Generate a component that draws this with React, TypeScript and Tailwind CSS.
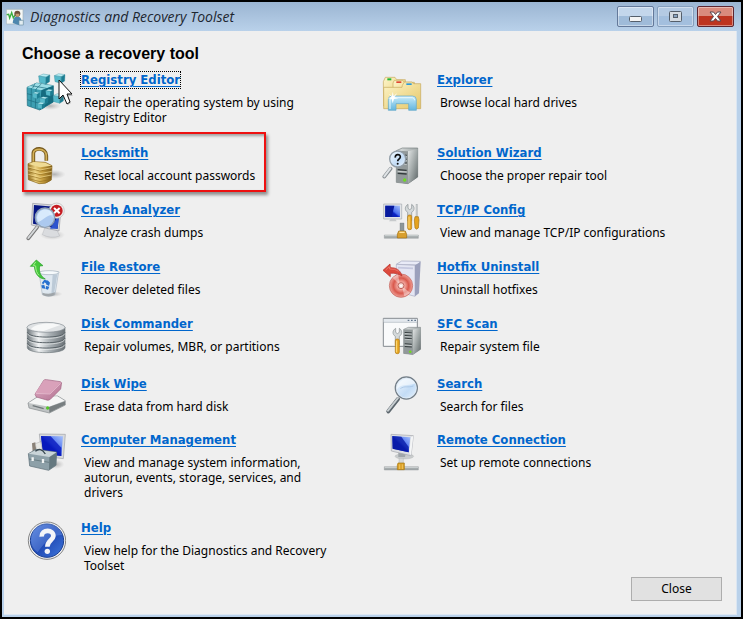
import type { ReactNode } from "react";

type Tool = {
  name: string;
  text: string;
  icon: ReactNode;
  focused?: boolean;
  marked?: boolean;
};

function Icon({ box, children }: { box: string; children: ReactNode }) {
  return (
    <svg viewBox={box} className="h-10 w-10 shrink-0" aria-hidden="true">
      {children}
    </svg>
  );
}

function Gradients() {
  return (
    <svg className="absolute h-0 w-0" aria-hidden="true">
      <defs>
        <linearGradient id="gold" x1="0" x2="1">
          <stop offset="0" stopColor="#8f6a1c" />
          <stop offset=".3" stopColor="#ecd282" />
          <stop offset=".6" stopColor="#c79f40" />
          <stop offset="1" stopColor="#7b5814" />
        </linearGradient>
        <linearGradient id="screen" x1="0" y1="1" x2="1" y2="0">
          <stop offset="0" stopColor="#0a1a8c" />
          <stop offset=".45" stopColor="#0b22c4" />
          <stop offset=".55" stopColor="#4a6ff0" />
          <stop offset="1" stopColor="#a9c4fb" />
        </linearGradient>
        <linearGradient id="lens" x1="0" y1="0" x2="1" y2="1">
          <stop offset="0" stopColor="#f4faff" />
          <stop offset=".6" stopColor="#c3dcf6" />
          <stop offset="1" stopColor="#e8f3fd" />
        </linearGradient>
        <linearGradient id="steel" x1="0" x2="1">
          <stop offset="0" stopColor="#6f777c" />
          <stop offset=".3" stopColor="#f1f3f4" />
          <stop offset=".6" stopColor="#a9b0b4" />
          <stop offset="1" stopColor="#6a7176" />
        </linearGradient>
        <linearGradient id="tower" x1="0" y1="0" x2="1" y2="1">
          <stop offset="0" stopColor="#e3e6e6" />
          <stop offset=".5" stopColor="#a2a9a9" />
          <stop offset="1" stopColor="#5e6768" />
        </linearGradient>
        <linearGradient id="folder" x1="0" y1="0" x2="1" y2="1">
          <stop offset="0" stopColor="#fdf5c9" />
          <stop offset="1" stopColor="#e5c768" />
        </linearGradient>
        <linearGradient id="glass" x1="0" y1="0" x2="0" y2="1">
          <stop offset="0" stopColor="#c9ecfa" />
          <stop offset="1" stopColor="#62b5de" />
        </linearGradient>
        <linearGradient id="pink" x1="0" y1="0" x2="1" y2="1">
          <stop offset="0" stopColor="#e0aec5" />
          <stop offset="1" stopColor="#b37292" />
        </linearGradient>
        <linearGradient id="helpBlue" x1="0" y1="0" x2="1" y2="1">
          <stop offset="0" stopColor="#5b86dd" />
          <stop offset=".5" stopColor="#2049b4" />
          <stop offset="1" stopColor="#3f78dd" />
        </linearGradient>
        <radialGradient id="disc">
          <stop offset="0" stopColor="#fff" />
          <stop offset=".3" stopColor="#f3aaa2" />
          <stop offset=".65" stopColor="#d9594d" />
          <stop offset="1" stopColor="#f0a198" />
        </radialGradient>
        <radialGradient id="shade">
          <stop offset="0" stopColor="#888" stopOpacity=".6" />
          <stop offset="1" stopColor="#aaa" stopOpacity="0" />
        </radialGradient>
      </defs>
    </svg>
  );
}

function Cube({ x, y, s = 1 }: { x: number; y: number; s?: number }) {
  return (
    <g transform={`translate(${x} ${y}) scale(${s})`} stroke="#2c8295" strokeWidth="1">
      <path d="M0 6 L13 0 L32 3 L21 9Z" fill="#b9edf3" />
      <path d="M0 6 L21 9 L20 29 L2 24Z" fill="#56b9ca" />
      <path d="M21 9 L32 3 L31 22 L20 29Z" fill="#1b7d92" />
    </g>
  );
}

const registry = (
  <Icon box="78 216 120 120">
    <ellipse cx="150" cy="318" rx="34" ry="12" fill="url(#shade)" />
    <path d="M81 262 L110 249 L160 257 L160 306 L119 330 L82 317Z" fill="#3c9fb2" stroke="#1e6c7f" strokeWidth="2" />
    <path d="M81 262 L110 249 L160 257 L124 271Z" fill="#9cdde6" />
    <path d="M124 271 L160 257 L160 306 L119 330Z" fill="#146b7f" />
    <path
      d="M94 264 L93 320 M108 267 L106 325 M81 281 L122 291 M82 299 L120 311 M94 257 L140 265 M105 251 L98 264 M124 252 L108 267"
      stroke="#1b6a7c"
      strokeWidth="2"
      fill="none"
    />
    <Cube x={97} y={276} s={0.7} />
    <Cube x={119} y={290} s={0.8} />
    <Cube x={137} y={268} s={0.7} />
    <Cube x={112} y={307} s={0.7} />
    <Cube x={116} y={222} s={1.05} />
    <Cube x={163} y={221} s={1} />
    <Cube x={159} y={281} s={1} />
  </Icon>
);

const padlock = (
  <Icon box="33 60 120 120">
    <ellipse cx="118" cy="148" rx="34" ry="14" fill="url(#shade)" />
    <path d="M55 113 V86 C54 66 94 66 94 92 V107" fill="none" stroke="#76591d" strokeWidth="11" />
    <path d="M55 113 V86 C54 68 94 68 94 92 V107" fill="none" stroke="#d4b158" strokeWidth="5" />
    <path d="M39 116 L55 110 L91 112 L111 122 L109 165 Q91 179 72 176 L40 164Z" fill="url(#gold)" stroke="#8a6820" strokeWidth="2" />
    <path d="M40 117 L56 111 L91 113 L110 122 L75 127Z" fill="#efdb94" />
    <path d="M40 129 L75 138 L110 131 M40 140 L75 149 L110 142 M40 151 L75 160 L109 153 M41 161 L75 170 L108 163" fill="none" stroke="#94701f" strokeWidth="2" />
    <path d="M40 126 L75 135 L110 128 M40 137 L75 146 L110 139 M40 148 L75 157 L109 150" fill="none" stroke="#f4dc90" strokeWidth="2" />
  </Icon>
);

const crash = (
  <Icon box="33 231 120 120">
    <ellipse cx="112" cy="330" rx="38" ry="15" fill="url(#shade)" />
    <path d="M90 306 L124 312 L134 333 Q108 342 82 329Z" fill="#dadcdf" stroke="#a5a8ad" />
    <path d="M53 235 L139 242 L132 318 L49 300Z" fill="#d8d9dc" stroke="#9a9ca3" strokeWidth="2" />
    <path d="M57 240 L134 247 L128 311 L54 296Z" fill="#071784" />
    <path d="M105 311 L128 275 L134 247 L128 311Z" fill="#2e54ce" />
    <circle cx="125" cy="257" r="23" fill="#eee" stroke="#bbb" strokeWidth="2" />
    <circle cx="125" cy="257" r="18" fill="#c51c22" />
    <path d="M117 249 L134 265 M134 249 L117 265" stroke="#fff" strokeWidth="6" />
    <path d="M40 340 L66 307" stroke="#777" strokeWidth="11" strokeLinecap="round" />
    <path d="M40 339 L66 306" stroke="#d5d8da" strokeWidth="6" strokeLinecap="round" />
    <circle cx="90" cy="278" r="29" fill="#b9d7f7" fillOpacity=".93" stroke="#8fa0b4" strokeWidth="4" />
    <path d="M66 277 C72 246 106 249 114 269 C95 270 83 287 68 291Z" fill="#e4f2ff" fillOpacity=".8" />
  </Icon>
);

const restore = (
  <Icon box="33 27 120 120">
    <ellipse cx="113" cy="132" rx="30" ry="9" fill="url(#shade)" />
    <path d="M72 67 L131 65 L120 134 Q100 143 82 134Z" fill="#dde7ef" fillOpacity=".9" stroke="#aab8c6" strokeWidth="2" />
    <ellipse cx="102" cy="68" rx="30" ry="6" fill="#f6fafc" stroke="#a3b0bd" strokeWidth="2" />
    <path d="M113 74 L127 73 L117 132 L109 134Z" fill="#bccad7" />
    <path d="M82 128 Q101 135 120 127 L119 135 Q101 144 83 135Z" fill="#9fa5a9" />
    <path d="M81 98 L88 89 L99 92 L94 101 L89 97 L84 104Z M98 91 L105 98 L102 108 L93 103Z M79 106 L88 105 L91 116 L81 115Z M93 108 L103 110 L99 119 L92 117Z" fill="#2670cf" />
    <path d="M46 49 L64 30 L84 47 L74 48 C71 65 76 78 91 87 C74 87 60 75 58 49Z" fill="#45c83b" stroke="#259d27" strokeWidth="2" />
    <path d="M62 36 L55 46 L62 48 C62 61 66 70 72 76" fill="none" stroke="#a4f18d" strokeWidth="3" />
  </Icon>
);

const disks = (
  <Icon box="33 198 120 120">
    <path d="M37 231 V293 C38 313 149 313 150 293 V231Z" fill="url(#steel)" stroke="#737b80" strokeWidth="2" />
    <path d="M37 247 C40 266 147 266 150 247 M37 264 C40 283 147 283 150 264 M37 280 C40 299 147 299 150 280" fill="none" stroke="#596267" strokeWidth="3" />
    <path d="M38 251 C42 270 145 270 149 251 M38 268 C42 287 145 287 149 268 M38 284 C42 303 145 303 149 284" fill="none" stroke="#eef1f2" strokeWidth="2" />
    <ellipse cx="93" cy="232" rx="57" ry="15" fill="#dfe2e4" stroke="#858d92" strokeWidth="2" />
    <path d="M48 237 C61 218 117 217 136 225 L86 243 C71 243 53 241 48 237Z" fill="#f7f8f8" />
  </Icon>
);

const wipe = (
  <Icon box="33 378 120 120">
    <path d="M39 459 L68 440 L128 438 L151 452 L151 465 L103 489 L42 474Z" fill="#bfc3c4" stroke="#858a8d" strokeWidth="2" />
    <path d="M41 459 L69 441 L127 439 L149 452 L102 470Z" fill="#f5f6f6" />
    <path d="M102 471 L150 454 V464 L103 488Z" fill="#777e80" />
    <path d="M53 467 L86 476" stroke="#70777a" strokeWidth="4" />
    <circle cx="98" cy="474" r="5" fill="#56c42a" />
    <path d="M60 433 L86 391 Q89 388 95 389 L136 395 Q142 397 139 404 L137 417 L106 448 Q100 453 92 449 L64 441Z" fill="url(#pink)" stroke="#a06280" strokeWidth="2" />
    <path d="M61 429 L87 391 L138 397 L105 431Z" fill="#d9a1ba" />
    <path d="M62 430 L105 432 L137 400" stroke="#ecc6d7" strokeWidth="2" fill="none" />
  </Icon>
);

const computer = (
  <Icon box="33 21 120 120">
    <ellipse cx="123" cy="118" rx="25" ry="14" fill="url(#shade)" />
    <path d="M73 27 L151 28 L145 101 L80 93Z" fill="#d8dadd" stroke="#9ea1a6" strokeWidth="2" />
    <path d="M78 33 L144 34 L139 93 L84 86Z" fill="url(#screen)" />
    <path d="M78 33 L107 34 L139 68 L139 93 L84 86Z" fill="#0718bd" fillOpacity=".8" />
    <path d="M51 55 L61 52 L64 82 H53Z" fill="#8a8177" />
    <path d="M61 56 L77 50 L83 79 H65Z" fill="#e7e7e3" stroke="#888" />
    <path d="M40 86 L63 73 L125 81 L123 121 L101 136 L44 123Z" fill="#8da0a8" stroke="#596b74" strokeWidth="2" />
    <path d="M41 86 L64 74 L124 82 L103 96Z" fill="#c9d4d8" />
    <path d="M103 97 L124 83 L123 120 L102 135Z" fill="#65787f" />
    <path d="M42 102 L102 112" stroke="#566970" strokeWidth="2" />
    <path d="M61 79 Q77 65 91 87" fill="none" stroke="#38474f" strokeWidth="4" />
    <path d="M53 97 V108 M84 102 V114" stroke="#f1f4f4" strokeWidth="7" />
  </Icon>
);

const help = (
  <Icon box="33 285 120 120">
    <circle cx="96" cy="347" r="56" fill="#f0f0f1" stroke="#858585" strokeWidth="3" />
    <circle cx="96" cy="347" r="50" fill="url(#helpBlue)" stroke="#1b3f91" strokeWidth="3" />
    <path d="M48 344 C51 281 128 280 142 330 C111 327 85 356 68 382 C54 371 48 357 48 344Z" fill="#7da2ed" fillOpacity=".35" />
    <path d="M80 335 C79 312 117 312 115 334 C114 346 97 347 97 365" fill="none" stroke="#f4f4f8" strokeWidth="14" />
    <circle cx="97" cy="379" r="8" fill="#f4f4f8" />
  </Icon>
);

const explorer = (
  <Icon box="24 36 120 120">
    <path d="M28 65 L34 52 H63 L68 59 H94 V138 H29Z" fill="url(#folder)" stroke="#c5a75b" strokeWidth="2" />
    <path d="M57 69 L61 61 H86 L91 67 H121 V142 H57Z" fill="url(#folder)" stroke="#c5a75b" strokeWidth="2" />
    <path d="M85 76 L91 66 H113 L119 71 H140 V146 H29 V82 H84Z" fill="url(#folder)" stroke="#c5a75b" strokeWidth="2" />
    <path d="M40 55 H52 V61 H40Z" fill="#24b536" />
    <path d="M67 64 H82 V69 H67Z" fill="#df4632" />
    <path d="M97 70 H113 V75 H97Z" fill="#2b9adb" />
    <path d="M43 151 V119 Q43 108 54 108 H115 Q127 108 127 119 V151 H104 V131 H66 V151Z" fill="url(#glass)" stroke="#61a7c9" strokeWidth="2" />
    <path d="M48 147 V120 Q49 113 56 113 H115 Q122 114 122 121" fill="none" stroke="#e5f8ff" strokeWidth="3" />
    <path d="M56 95 L59 108 L70 99 L61 112 L73 115 L60 117 L56 130 L53 117 L42 115 L53 111 L43 101 L54 108Z" fill="#fff" />
  </Icon>
);

function Tower({ x, y }: { x: number; y: number }) {
  return (
    <g transform={`translate(${x} ${y})`}>
      <path d="M0 8 L18 0 H64 V87 L35 107 L0 103Z" fill="url(#tower)" stroke="#737b7c" strokeWidth="2" />
      <path d="M0 8 L35 10 V107 L0 103Z" fill="#92999a" />
      <path d="M35 10 L64 2 V87 L35 107Z" fill="url(#tower)" />
      <path d="M4 20 L31 22 M4 32 L31 34 M4 43 L31 45 M4 65 L31 67 M4 76 L31 78" stroke="#333a3c" strokeWidth="4" />
      <path d="M4 24 L31 26 M4 36 L31 38 M4 47 L31 49 M4 70 L31 72" stroke="#e8eceb" strokeWidth="2" />
      <circle cx="25" cy="96" r="5" fill="#6ddb1e" />
    </g>
  );
}

const wizard = (
  <Icon box="24 255 120 120">
    <Tower x={67} y={264} />
    <path d="M31 350 L50 326" stroke="#888e93" strokeWidth="11" strokeLinecap="round" />
    <path d="M31 349 L49 325" stroke="#dfe3e6" strokeWidth="6" strokeLinecap="round" />
    <circle cx="71" cy="297" r="24" fill="url(#lens)" stroke="#929da7" strokeWidth="4" />
    <path d="M64 293 C62 281 80 281 79 291 C78 298 71 297 71 304" fill="none" stroke="#0d0d0d" strokeWidth="5" />
    <circle cx="71" cy="311" r="3" fill="#0d0d0d" />
  </Icon>
);

function Wrench({ x, y }: { x: number; y: number }) {
  return (
    <g transform={`translate(${x} ${y})`}>
      <path d="M-5 0 C-15 6 -16 18 -6 24 V49 H6 V24 C16 18 15 6 6 0 V12 L0 16 L-5 12Z" fill="#d4d9da" stroke="#858c8f" strokeWidth="2" />
      <rect x="-6" y="32" width="12" height="44" rx="5" fill="#e7a521" stroke="#af7910" strokeWidth="2" />
      <path d="M-2 37 V72" stroke="#ffe184" strokeWidth="3" />
    </g>
  );
}

const tcp = (
  <Icon box="24 21 120 120">
    <path d="M29 27 H83 V72 H29Z" fill="#e3e5e8" stroke="#a6aab0" strokeWidth="2" />
    <path d="M34 32 H78 V66 H34Z" fill="url(#screen)" />
    <path d="M34 32 H61 L53 66 H34Z" fill="#071a9f" />
    <path d="M50 72 H64 L68 79 H45Z" fill="#c7cacc" />
    <path d="M31 120 H133 V130 H31Z" fill="#a6acad" stroke="#7f8789" />
    <path d="M32 122 H132" stroke="#e9eded" strokeWidth="2" />
    <path d="M78 84 H90 V108 H78Z" fill="#8d9698" stroke="#6d7679" />
    <path d="M74 108 H94 L98 118 V129 H70 V118Z" fill="#d89f2e" stroke="#9f6e12" strokeWidth="2" />
    <path d="M76 112 H92" stroke="#ffe39c" strokeWidth="4" />
    <Wrench x={107} y={28} />
    <path d="M128 27 V67" stroke="#9ba1a3" strokeWidth="5" />
    <path d="M128 28 V65" stroke="#e1e4e5" strokeWidth="2" />
    <path d="M123 65 H133 L135 75 L133 99 Q128 106 123 99 L121 75Z" fill="#e5a21d" stroke="#a8740e" strokeWidth="2" />
  </Icon>
);

const hotfix = (
  <Icon box="24 192 120 120">
    <path d="M67 208 L83 198 L139 199 L133 210Z" fill="#e9ebf7" stroke="#a0a4bd" strokeWidth="2" />
    <path d="M67 208 L123 211 V304 L66 289Z" fill="#e4e6f3" stroke="#a9acc3" strokeWidth="2" />
    <path d="M123 211 L140 200 L135 295 L123 304Z" fill="#9ba0bc" />
    <path d="M72 218 L117 220" stroke="#c5c8df" strokeWidth="5" />
    <circle cx="81" cy="272" r="35" fill="url(#disc)" stroke="#bf5f57" strokeWidth="2" />
    <path d="M78 270 L56 248 L72 238Z M84 274 L91 304 L109 294Z" fill="#fff" fillOpacity=".4" />
    <circle cx="81" cy="272" r="9" fill="#f5dcd8" stroke="#bf6159" strokeWidth="3" />
    <circle cx="81" cy="272" r="3" fill="#fff" />
    <path d="M27 226 L48 207 L49 218 C65 217 80 225 84 243 C73 235 62 234 49 235 V245Z" fill="#dc493c" stroke="#b72e27" strokeWidth="2" />
    <path d="M35 225 L46 215 L47 222 Q63 221 74 229" fill="none" stroke="#f0897d" strokeWidth="2" />
  </Icon>
);

const sfc = (
  <Icon box="24 18 120 120">
    <path d="M28 25 H130 V109 H28Z" fill="#f9fafb" stroke="#858b91" strokeWidth="3" />
    <path d="M29 27 H129 V36 H29Z" fill="#e4e9ee" />
    <path d="M29 37 H129" stroke="#acb4bc" strokeWidth="2" />
    <path d="M101 31 H106 M111 31 H116 M121 31 H126" stroke="#61758c" strokeWidth="4" />
    <g transform="translate(89 52) scale(.79 .76)">
      <Tower x={0} y={0} />
    </g>
    <Wrench x={70} y={55} />
  </Icon>
);

const search = (
  <Icon box="24 198 120 120">
    <path d="M43 304 L72 267" stroke="#5c666d" strokeWidth="12" strokeLinecap="round" />
    <path d="M42 302 L72 264" stroke="#c8ced1" strokeWidth="6" strokeLinecap="round" />
    <circle cx="97" cy="234" r="33" fill="url(#lens)" stroke="#747f89" strokeWidth="4" />
    <circle cx="97" cy="234" r="30" fill="none" stroke="#e4edf5" strokeWidth="2" />
    <path d="M69 238 C83 218 101 231 124 220 C119 208 98 200 82 212 C73 219 69 227 69 238Z" fill="#fff" fillOpacity=".55" />
    <path d="M79 236 C93 226 101 234 118 228" fill="none" stroke="#9dbce0" strokeWidth="2" />
  </Icon>
);

const remote = (
  <Icon box="24 366 120 120">
    <ellipse cx="91" cy="439" rx="28" ry="8" fill="#c9cccd" stroke="#a9adae" />
    <path d="M73 426 L95 430 L93 441 H73Z" fill="#a0a6a9" />
    <path d="M51 373 L118 377 L111 437 L52 423Z" fill="#dee0e4" stroke="#a3a5aa" strokeWidth="2" />
    <path d="M55 378 L109 382 L104 427 L56 416Z" fill="url(#screen)" />
    <path d="M55 378 L82 380 L104 411 L104 427 L56 416Z" fill="#0719a5" fillOpacity=".8" />
    <path d="M111 382 L118 377 L111 437 L106 428Z" fill="#f4f5f6" />
    <path d="M31 470 H133 V480 H31Z" fill="#a6acad" stroke="#7b8385" />
    <path d="M32 472 H132" stroke="#e9eded" strokeWidth="2" />
    <path d="M75 445 H88 V461 H75Z" fill="#d7d9d9" stroke="#a3a6a7" />
    <path d="M72 459 H91 V479 H70 V466Z" fill="#daa128" stroke="#a57511" strokeWidth="2" />
    <path d="M77 463 V477 M85 463 V477" stroke="#f0c460" strokeWidth="3" />
  </Icon>
);

const tools: Tool[] = [
  { name: "Registry Editor", text: "Repair the operating system by using Registry Editor", icon: registry, focused: true },
  { name: "Explorer", text: "Browse local hard drives", icon: explorer },
  { name: "Locksmith", text: "Reset local account passwords", icon: padlock, marked: true },
  { name: "Solution Wizard", text: "Choose the proper repair tool", icon: wizard },
  { name: "Crash Analyzer", text: "Analyze crash dumps", icon: crash },
  { name: "TCP/IP Config", text: "View and manage TCP/IP configurations", icon: tcp },
  { name: "File Restore", text: "Recover deleted files", icon: restore },
  { name: "Hotfix Uninstall", text: "Uninstall hotfixes", icon: hotfix },
  { name: "Disk Commander", text: "Repair volumes, MBR, or partitions", icon: disks },
  { name: "SFC Scan", text: "Repair system file", icon: sfc },
  { name: "Disk Wipe", text: "Erase data from hard disk", icon: wipe },
  { name: "Search", text: "Search for files", icon: search },
  {
    name: "Computer Management",
    text: "View and manage system information, autorun, events, storage, services, and drivers",
    icon: computer,
  },
  { name: "Remote Connection", text: "Set up remote connections", icon: remote },
  { name: "Help", text: "View help for the Diagnostics and Recovery Toolset", icon: help },
];

function ToolItem({ tool }: { tool: Tool }) {
  return (
    <li className="relative flex items-start gap-[15px]">
      {tool.icon}
      <div className="min-w-0">
        <a
          href="#"
          className={
            "block w-fit text-[13px] leading-4 font-bold whitespace-nowrap text-[#0066cc] underline decoration-1 underline-offset-2" +
            (tool.focused ? " outline-1 outline-black outline-dotted" : "")
          }
        >
          {tool.name}
        </a>
        <p className="mt-[7px] max-w-[254px] pl-[3px] font-['Noto_Sans',sans-serif] text-[12px] leading-[15px] text-black">
          {tool.text}
        </p>
      </div>
      {tool.focused && (
        <svg viewBox="0 0 16 27" className="absolute top-[7px] left-8 h-[27px] w-4" aria-hidden="true">
          <path d="M2 3 V22 L6 18 L10 26 L13 24 L10 17 H15Z" fill="#777" fillOpacity=".4" />
          <path d="M1 1 V20 L5 16 L9 25 L12 23 L9 15 H14Z" fill="#fff" stroke="#111" />
        </svg>
      )}
      {tool.marked && (
        <span className="pointer-events-none absolute -top-[13px] -left-1 h-[60px] w-[244px] border-2 border-[#ee1111] shadow-[2px_3px_3px_#0006,inset_2px_2px_3px_#0005]" />
      )}
    </li>
  );
}

const captionButton =
  "flex h-[21px] w-[37px] items-center justify-center rounded-[2px] border shadow-[inset_0_0_0_1px_#ffffff66]";

export default function App() {
  return (
    <main className="flex min-h-screen flex-col border-2 border-black bg-[#b9d1ea] pr-1 pb-0.5 pl-0.5 font-['DejaVu_Sans_Condensed','Noto_Sans',sans-serif]">
      <Gradients />
      <header className="-mr-1 -ml-0.5 flex h-[29px] items-center bg-linear-to-b from-[#9bb5d2] to-[#b9d1ea] pr-[7px] pl-1">
        <svg viewBox="0 0 54 54" className="h-[18px] w-[18px]" aria-hidden="true">
          <path d="M1 4 H51 V48 H1Z" fill="#f5f8f6" stroke="#a5b2b8" strokeWidth="2" />
          <path d="M2 20 L8 19 L11 30 L17 14 L22 30 L27 22 L32 20" fill="none" stroke="#38ad3e" strokeWidth="4" />
          <path d="M20 45 Q22 25 34 25 Q46 25 48 45 L39 52Z" fill="#4d86ae" />
          <circle cx="34" cy="17" r="9" fill="#6d5038" />
          <path d="M29 17 H40 V24 Q34 29 29 23Z" fill="#c49a70" />
          <path d="M39 37 H52 V51 H39Z" fill="#e2edf2" stroke="#6c8fa4" strokeWidth="2" />
        </svg>
        <h1 className="ml-1.5 flex-1 font-['Open_Sans','Noto_Sans',sans-serif] text-[14px] leading-5 text-[#1d2630] italic">
          Diagnostics and Recovery Toolset
        </h1>
        <div className="flex gap-[3px]">
          <button
            type="button"
            aria-label="Minimize"
            className={captionButton + " border-[#64799a] bg-linear-to-b from-[#c3d6eb] from-50% to-[#9fbbd9] to-50%"}
          >
            <svg viewBox="0 0 13 7" className="mt-1 h-[7px] w-[13px]" aria-hidden="true">
              <rect x=".5" y="1.5" width="12" height="5" rx="1" fill="#f4f4f4" stroke="#555f6b" />
            </svg>
          </button>
          <button
            type="button"
            aria-label="Maximize"
            className={captionButton + " border-[#869fbd] bg-linear-to-b from-[#b4cae3] from-50% to-[#a3bfde] to-50%"}
          >
            <svg viewBox="0 0 13 11" className="h-[11px] w-[13px]" aria-hidden="true">
              <rect x=".5" y=".5" width="12" height="10" rx="1" fill="#d5dce3" stroke="#555f6b" />
              <rect x="4.5" y="3.5" width="4" height="3" fill="#8aa5c2" stroke="#555f6b" />
            </svg>
          </button>
          <button
            type="button"
            aria-label="Close window"
            className={captionButton + " border-[#5d2530] bg-linear-to-b from-[#d98b7d] from-50% to-[#bd3420] to-50%"}
          >
            <svg viewBox="0 0 13 11" className="h-[11px] w-[13px]" aria-hidden="true">
              <path
                d="M1 1 H4.5 L6.5 3.5 L8.5 1 H12 L8.5 5.5 L12 10 H8.5 L6.5 7.5 L4.5 10 H1 L4.5 5.5Z"
                fill="#fff"
                stroke="#574750"
              />
            </svg>
          </button>
        </div>
      </header>

      <section className="flex flex-1 flex-col border-r border-b border-[#dbe6f2] bg-[#efefef] pt-[13px] pr-[14px] pb-[13px] pl-[22px]">
        <h2 className="-ml-1 font-['Liberation_Sans',Arial,sans-serif] text-[16px] leading-5 font-bold text-black">
          Choose a recovery tool
        </h2>
        <ul className="mt-2 grid grid-cols-[356px_1fr] grid-rows-[73px_57px_57px_57px_60px_56px_88px_auto]">
          {tools.map((tool) => (
            <ToolItem key={tool.name} tool={tool} />
          ))}
        </ul>
        <button
          type="button"
          className="mt-auto h-6 w-[91px] self-end border border-[#adadad] bg-[#e1e1e1] font-['Noto_Sans',sans-serif] text-[12px] leading-4 text-black"
        >
          Close
        </button>
      </section>
    </main>
  );
}
